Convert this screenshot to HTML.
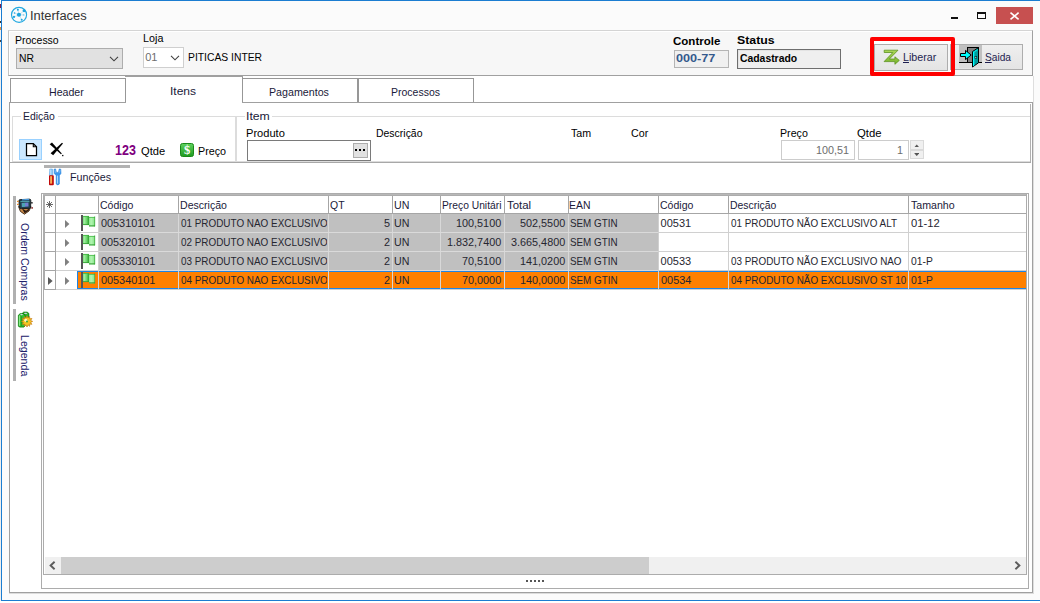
<!DOCTYPE html>
<html lang="pt-BR"><head><meta charset="utf-8"><title>Interfaces</title>
<style>
html,body{margin:0;padding:0;}
body{width:1040px;height:603px;overflow:hidden;background:#fbfbfb;font-family:"Liberation Sans",sans-serif;font-size:11px;}
#w{position:relative;width:1040px;height:603px;overflow:hidden;background:#fbfbfb;}
#w div,#w span.t,#w svg{position:absolute;box-sizing:border-box;}
#w span.t{white-space:nowrap;transform-origin:0 0;}
u{text-decoration:underline;}
</style></head><body><div id="w">
<div style="left:0px;top:0px;width:1px;height:603px;background:linear-gradient(#fff 0 4px,#7a2050 4px 8px,#cfe6fa 8px 10px,#fff 10px 21px,#333 21px 23px,#fff 23px 27px,#e09040 27px 30px,#f0f0f0 30px 40px,#444 40px 42px,#eee 42px 100%);"></div>
<div style="left:1px;top:0px;width:1039px;height:1px;background:#1b7dd1;"></div>
<div style="left:1px;top:0px;width:1px;height:601px;background:#1b7dd1;"></div>
<div style="left:1px;top:600px;width:1039px;height:1px;background:#1b7dd1;"></div>
<div style="left:0px;top:601px;width:1040px;height:2px;background:#fff;"></div>
<svg style="left:10px;top:6px" width="18" height="18" viewBox="0 0 18 18"><g fill="none" stroke="#22a8e0"><circle cx="9.05" cy="8.85" r="7.55" stroke-width="1.15"/><path d="M8.95 8.8 L14.06 4.75 M8.95 8.8 L7.85 3.84 M8.95 8.8 L4.5 7.05 M8.95 8.8 L4 10.96 M8.95 8.8 L11.7 13.77 M8.95 8.8 L13.7 8.95" stroke-width=".55" opacity=".5"/></g><g fill="#1ba4de"><circle cx="8.95" cy="8.77" r="2.05"/><circle cx="14.06" cy="4.75" r="1.45"/><circle cx="7.85" cy="3.84" r="1"/><circle cx="4.5" cy="7.05" r=".8"/><circle cx="4" cy="10.96" r="1.1"/><circle cx="11.7" cy="13.77" r="1"/><circle cx="13.7" cy="8.95" r=".9" opacity=".4"/></g></svg>
<span class="t" style="left:30.31px;top:9.22px;font-size:12.5px;line-height:14.5px;color:#333;transform:scaleX(1.0320);">Interfaces</span>
<div style="left:951px;top:17px;width:7px;height:2px;background:#111;"></div>
<div style="left:977px;top:12px;width:9px;height:7px;border:1px solid #111;border-top-width:2px;"></div>
<div style="left:996px;top:7px;width:37px;height:17px;background:#c75050;"></div>
<svg style="left:1009px;top:10.5px" width="11" height="10" viewBox="0 0 11 10"><path d="M1.5 1.7 L9.6 8.4 M9.6 1.7 L1.5 8.4" stroke="#fff" stroke-width="1.6" fill="none"/></svg>
<div style="left:8px;top:30px;width:1025px;height:46px;background:#f7f7f7;border-top:1px solid #d4d4d4;border-left:1px solid #c4c4c4;border-right:1px solid #a0a0a0;border-bottom:1px solid #a0a0a0;box-shadow:inset 1px 1px 0 #fff;"></div>
<span class="t" style="left:14.74px;top:33.69px;font-size:11px;line-height:13px;color:#000;transform:scaleX(0.9528);">Processo</span>
<div style="left:16px;top:48px;width:107px;height:21px;background:#e1e1e1;border:1px solid #adadad;"></div>
<span class="t" style="left:18.56px;top:51.69px;font-size:11px;line-height:13px;color:#000;transform:scaleX(0.9387);">NR</span>
<svg style="left:108.5px;top:56px" width="10" height="6" viewBox="0 0 10 6"><path d="M1 .8 L5 4.8 L9 .8" stroke="#404040" stroke-width="1.1" fill="none"/></svg>
<span class="t" style="left:142.62px;top:31.69px;font-size:11px;line-height:13px;color:#000;transform:scaleX(0.9799);">Loja</span>
<div style="left:143px;top:47px;width:41px;height:21px;background:#fff;border:1px solid #cfcfcf;"></div>
<span class="t" style="left:145.17px;top:50.69px;font-size:11px;line-height:13px;color:#6d6d6d;">01</span>
<svg style="left:170px;top:55px" width="10" height="6" viewBox="0 0 10 6"><path d="M1 .8 L5 4.8 L9 .8" stroke="#404040" stroke-width="1.1" fill="none"/></svg>
<span class="t" style="left:187.65px;top:50.69px;font-size:11px;line-height:13px;color:#000;transform:scaleX(0.9395);">PITICAS INTER</span>
<span class="t" style="left:673.28px;top:34.69px;font-size:11px;line-height:13px;color:#000;font-weight:bold;transform:scaleX(1.0473);">Controle</span>
<span class="t" style="left:736.90px;top:33.69px;font-size:11px;line-height:13px;color:#000;font-weight:bold;transform:scaleX(1.1183);">Status</span>
<div style="left:674px;top:50px;width:55px;height:18px;background:#f0f0f0;border:1px solid #b4b4b4;"></div>
<span class="t" style="left:675.76px;top:53.44px;font-size:10px;line-height:12px;color:#33588c;font-weight:bold;transform:scaleX(1.2649);">000-77</span>
<div style="left:737px;top:49px;width:104px;height:20px;background:#efefef;border:1px solid #6e6e6e;box-shadow:inset 1px 1px 0 #e3e3e3;"></div>
<span class="t" style="left:740.18px;top:51.69px;font-size:11px;line-height:13px;color:#000;font-weight:bold;transform:scaleX(0.9438);">Cadastrado</span>
<div style="left:874px;top:44px;width:74px;height:27px;background:linear-gradient(#efefef,#e4e4e4);border:1px solid #adadad;"></div>
<div style="left:950px;top:44px;width:73px;height:26px;background:linear-gradient(#efefef,#e4e4e4);border:1px solid #adadad;"></div>
<svg style="left:883px;top:49px" width="18" height="17" viewBox="0 0 18 17"><defs><linearGradient id="gz" x1="0" y1="0" x2="0" y2="1"><stop offset="0" stop-color="#acd858"/><stop offset="1" stop-color="#78b42c"/></linearGradient></defs><path d="M1.2 1.2 H15 L6.4 10 H11.9 V7.8 L16.3 11.4 L11.9 15.3 V12.6 H1.1 L9.8 3.5 H1.2 Z" fill="url(#gz)" stroke="#5c9220" stroke-width=".8" stroke-linejoin="round"/></svg>
<span class="t" style="left:902.87px;top:50.69px;font-size:11px;line-height:13px;color:#1e1e50;transform:scaleX(0.9725);"><u>L</u>iberar</span>
<svg style="left:959px;top:45px" width="23" height="23" viewBox="0 0 23 23">
<rect x="0" y="0" width="23" height="17" fill="#c0c0c0"/>
<rect x="0" y="18" width="23" height="5" fill="#dedede"/>
<rect x="0" y="17" width="23" height="1" fill="#000"/>
<rect x="8.5" y="2.5" width="11" height="15" fill="#808080" stroke="#000" stroke-width="1"/>
<path d="M13.5 6.6 L19.5 2.6 V17.8 L13.5 22 Z" fill="#009c9c" stroke="#000" stroke-width="1" stroke-linejoin="miter"/>
<path d="M14 7 L15.3 6.1 V20.4 L14 21.3 Z" fill="#00ffff"/>
<path d="M15.3 6.1 L18.6 3.9 V5.2 L15.3 7.4 Z" fill="#00e6e6"/>
<rect x="15.9" y="11.6" width="1.8" height="1.8" fill="#a8dcdc" stroke="#002828" stroke-width=".6"/>
<path d="M1.5 8.5 H6.5 V5.4 L12.2 10 L6.5 14.6 V11.5 H1.5 Z" fill="#00ffff" stroke="#000" stroke-width="1" stroke-linejoin="miter"/>
</svg>
<span class="t" style="left:985.24px;top:50.69px;font-size:11px;line-height:13px;color:#1e1e50;transform:scaleX(0.9227);"><u>S</u>aida</span>
<div style="left:874px;top:41px;width:77px;height:3px;background:#fff;"></div>
<div style="left:874px;top:71px;width:77px;height:1px;background:#fff;"></div>
<div style="left:870px;top:37px;width:85px;height:39px;border:4px solid #ff0000;border-radius:2px;"></div>
<div style="left:9px;top:76px;width:1024px;height:26px;background:#fff;"></div>
<div style="left:1033px;top:76px;width:1px;height:518px;background:#dedede;"></div>
<div style="left:9px;top:102px;width:1024px;height:491px;background:#fff;border:1px solid #a0a0a0;"></div>
<div style="left:9px;top:593px;width:1025px;height:1px;background:#dcdcdc;"></div>
<div style="left:10px;top:78px;width:116px;height:24px;background:#fff;border:1px solid #979797;border-bottom:none;"></div>
<div style="left:242px;top:78px;width:116px;height:24px;background:#fff;border:1px solid #979797;border-bottom:none;"></div>
<div style="left:358px;top:78px;width:116px;height:24px;background:#fff;border:1px solid #979797;border-bottom:none;"></div>
<div style="left:242px;top:76px;width:1px;height:2px;background:#979797;"></div>
<div style="left:126px;top:77px;width:116px;height:26px;background:#fff;"></div>
<div style="left:125px;top:76px;width:118px;height:1px;background:#a0a0a0;"></div>
<span class="t" style="left:48.88px;top:85.69px;font-size:11px;line-height:13px;color:#1a1a3a;transform:scaleX(0.9643);">Header</span>
<span class="t" style="left:169.80px;top:84.69px;font-size:11px;line-height:13px;color:#1a1a3a;transform:scaleX(1.0913);">Itens</span>
<span class="t" style="left:268.88px;top:85.69px;font-size:11px;line-height:13px;color:#1a1a3a;transform:scaleX(0.9698);">Pagamentos</span>
<span class="t" style="left:390.74px;top:85.69px;font-size:11px;line-height:13px;color:#1a1a3a;transform:scaleX(0.9548);">Processos</span>
<div style="left:1030px;top:104px;width:1px;height:59px;background:#b0b0b0;"></div>
<div style="left:10px;top:162px;width:1021px;height:1px;background:#a8a8a8;"></div>
<div style="left:12px;top:116px;width:224px;height:46px;border:1px solid #dcdcdc;"></div>
<div style="left:236px;top:116px;width:794px;height:46px;border-left:1px solid #dcdcdc;border-top:1px solid #dcdcdc;border-bottom:1px solid #dcdcdc;"></div>
<div style="left:21px;top:110px;width:37px;height:13px;background:#fff;"></div>
<div style="left:245px;top:110px;width:27px;height:13px;background:#fff;"></div>
<span class="t" style="left:23.05px;top:109.69px;font-size:11px;line-height:13px;color:#1a1a3a;transform:scaleX(0.9450);">Edição</span>
<span class="t" style="left:246.17px;top:109.69px;font-size:11px;line-height:13px;color:#1a1a3a;transform:scaleX(1.1138);">Item</span>
<div style="left:19px;top:139px;width:23px;height:21px;background:#cce8ff;border:1px solid #99d1ff;"></div>
<svg style="left:25px;top:142px" width="13" height="15" viewBox="0 0 13 15"><path d="M1.5 1.5 H8.3 L11.5 4.7 V13.5 H1.5 Z" fill="#fff" stroke="#000" stroke-width="1.25" stroke-linejoin="miter"/><path d="M8.3 1.5 V4.7 H11.5" fill="none" stroke="#000" stroke-width="1.1"/></svg>
<svg style="left:49px;top:142px" width="16" height="16" viewBox="0 0 16 16"><path d="M0.7 2.3 L3.0 0.6 L12.8 11.6 L12.0 12.3 Z" fill="#000"/><path d="M13.0 0.8 L14.0 1.6 L4.2 13.2 L1.6 11.2 Z" fill="#000"/><rect x="13.1" y="12.9" width="1.3" height="1.3" fill="#000"/></svg>
<span class="t" style="left:114.82px;top:142.15px;font-size:14px;line-height:16px;color:#800080;font-weight:bold;transform:scaleX(0.8937);">123</span>
<span class="t" style="left:141.38px;top:144.69px;font-size:11px;line-height:13px;color:#000;transform:scaleX(1.0109);">Qtde</span>
<svg style="left:180px;top:143px" width="14" height="14" viewBox="0 0 14 14"><defs><linearGradient id="gd" x1="0" y1="0" x2="0" y2="1"><stop offset="0" stop-color="#5fd35f"/><stop offset="1" stop-color="#1f9a1f"/></linearGradient></defs><rect x=".5" y=".5" width="13" height="13" rx="2" fill="url(#gd)" stroke="#1a8a1a"/><text x="7" y="11.4" font-family="Liberation Serif,serif" font-weight="bold" font-size="12.5" fill="#fff" text-anchor="middle">$</text></svg>
<span class="t" style="left:197.62px;top:144.69px;font-size:11px;line-height:13px;color:#000;transform:scaleX(0.9772);">Preço</span>
<span class="t" style="left:245.79px;top:126.69px;font-size:11px;line-height:13px;color:#000;transform:scaleX(1.0087);">Produto</span>
<span class="t" style="left:375.64px;top:126.69px;font-size:11px;line-height:13px;color:#000;transform:scaleX(0.9506);">Descrição</span>
<span class="t" style="left:570.97px;top:126.69px;font-size:11px;line-height:13px;color:#000;transform:scaleX(0.9685);">Tam</span>
<span class="t" style="left:630.97px;top:126.69px;font-size:11px;line-height:13px;color:#000;transform:scaleX(0.9706);">Cor</span>
<span class="t" style="left:779.73px;top:126.69px;font-size:11px;line-height:13px;color:#000;transform:scaleX(0.9680);">Preço</span>
<span class="t" style="left:857.17px;top:126.69px;font-size:11px;line-height:13px;color:#000;transform:scaleX(1.0284);">Qtde</span>
<div style="left:247px;top:140px;width:124px;height:21px;background:#fff;border:1px solid #7a7a7a;"></div>
<div style="left:353px;top:143px;width:15px;height:15px;background:#e1e1e1;border:1px solid #adadad;"></div>
<div style="left:355px;top:149px;width:2px;height:2px;background:#000;"></div>
<div style="left:359px;top:149px;width:2px;height:2px;background:#000;"></div>
<div style="left:363px;top:149px;width:2px;height:2px;background:#000;"></div>
<div style="left:781px;top:140px;width:74px;height:20px;background:#fff;border:1px solid #cccccc;"></div>
<span class="t" style="left:816.35px;top:143.69px;font-size:11px;line-height:13px;color:#6d6d6d;transform:scaleX(0.9800);">100,51</span>
<div style="left:858px;top:140px;width:51px;height:20px;background:#fff;border:1px solid #cccccc;"></div>
<span class="t" style="left:897.22px;top:143.69px;font-size:11px;line-height:13px;color:#6d6d6d;transform:scaleX(0.9800);">1</span>
<div style="left:910px;top:140px;width:14px;height:10px;background:#f0f0f0;border:1px solid #dadada;"></div>
<div style="left:910px;top:150px;width:14px;height:9px;background:#f0f0f0;border:1px solid #dadada;"></div>
<svg style="left:913.7px;top:143.6px" width="5.5" height="3.5" viewBox="0 0 6 4"><path d="M0 4 L3 0.5 L6 4 Z" fill="#555"/></svg>
<svg style="left:913.7px;top:152.8px" width="5.5" height="3.5" viewBox="0 0 6 4"><path d="M0 0 L3 3.5 L6 0 Z" fill="#555"/></svg>
<div style="left:44px;top:165px;width:86px;height:3px;background:#b2b2b2;"></div>
<svg style="left:48px;top:168px" width="14" height="18" viewBox="0 0 14 18">
<path d="M1.8 1 H4.4 L4.8 7.4 H1.4 Z" fill="#7cc0f2" stroke="#4a9be0" stroke-width=".5"/><path d="M2.8 1.4 V7" stroke="#e6f4ff" stroke-width=".8"/>
<rect x="1" y="7.2" width="4.8" height="10" rx=".9" fill="#c00808"/><rect x="2.5" y="8.2" width="1.6" height="7.4" fill="#f5a83c"/><rect x="2.5" y="8.2" width=".7" height="7.4" fill="#ffd890"/>
<path d="M6 1.2 L7.6 .9 L8.4 4.4 L10.4 4.4 L11.2 .9 L12.8 1.2 L13 5.4 L11.4 7.6 L11.4 16 Q9.8 17.8 8.2 16 L8.2 7.6 L6.2 5.4 Z" fill="#3b98ec" stroke="#1f7ad6" stroke-width=".5"/><path d="M9.6 7.6 V15.6" stroke="#b8defc" stroke-width="1"/><path d="M7 2 L7.4 4.8 M12 2 L11.6 4.8" stroke="#a8d4fa" stroke-width=".6"/></svg>
<span class="t" style="left:69.72px;top:170.69px;font-size:11px;line-height:13px;color:#1a1a3a;transform:scaleX(0.9731);">Funções</span>
<div style="left:13px;top:196px;width:3px;height:108px;background:#b0b0b0;"></div>
<div style="left:13px;top:309px;width:3px;height:72px;background:#b0b0b0;"></div>
<svg style="left:17px;top:198px" width="16" height="17" viewBox="0 0 16 17">
<path d="M1.6 8.6 L14 8.6 L12 13 L7.4 16.2 L3.4 13.4 Z" fill="#c98a4a" stroke="#3a2410" stroke-width=".9"/>
<path d="M5 10.5 L9 12.8 L12.4 10.2 L11.6 12.8 L7.6 15.2 Z" fill="#2a1a10"/>
<path d="M2 2.6 Q2 1.6 3.2 1.6 L12.6 1.2 Q13.8 1.2 13.8 2.4 L13.6 9.4 Q13.4 10.6 12 10.4 L4.4 10.6 Q2.4 10.6 2.2 9 Z" fill="#1f3f48" stroke="#15181c" stroke-width=".9"/>
<path d="M5 1.2 L12 .8 L12.2 2.2 L4.8 2.6 Z" fill="#4a9adc"/>
<path d="M4.6 5 L11.4 4.6 L11.6 8.6 L4.8 9 Z" fill="#6f7fd0"/><path d="M5 5.3 L8 5.1 L8 8.6 L5 8.8 Z" fill="#4aa7b0"/>
<path d="M3.4 3.6 H12.4" stroke="#5ec0c8" stroke-width=".8"/>
<rect x="0" y="2.8" width="1.8" height="1.2" fill="#e0862a"/><rect x="0" y="5.8" width="1.8" height="1.2" fill="#e0862a"/>
<rect x="14.2" y="4" width="1.4" height="1.6" fill="#1a1a1a"/><rect x="14.4" y="9" width="1.4" height="1.8" fill="#8a2a2a"/></svg>
<svg style="left:17px;top:311px" width="17" height="17" viewBox="0 0 17 17">
<path d="M5.4 2.2 L6.6 1.2 H10.2 L11.8 2.4 V12 H5.4 Z" fill="#2fb82f" stroke="#0c7a0c" stroke-width=".9"/>
<path d="M1.4 4.2 L3 2.8 H7 L8 4 V15 L7 16 H2.4 L1.4 15 Z" fill="#35c235" stroke="#0c7a0c" stroke-width=".9"/>
<path d="M2.4 4.6 V14.8" stroke="#8eea8e" stroke-width="1.1"/><path d="M4.6 5.2 V15" stroke="#1f9a1f" stroke-width=".9"/>
<ellipse cx="4.6" cy="3.6" rx="1.5" ry=".6" fill="#d8dce8"/><ellipse cx="8.6" cy="2.4" rx="1.5" ry=".6" fill="#c8cce0"/>
<g transform="translate(10,10.4)"><path d="M0 -5.6 L1 -3.4 L2.6 -4.9 L2.7 -2.6 L4.9 -2.9 L3.6 -1 L5.6 0 L3.6 1 L4.9 2.9 L2.7 2.6 L2.6 4.9 L1 3.4 L0 5.6 L-1 3.4 L-2.6 4.9 L-2.7 2.6 L-4.9 2.9 L-3.6 1 L-5.6 0 L-3.6 -1 L-4.9 -2.9 L-2.7 -2.6 L-2.6 -4.9 L-1 -3.4 Z" fill="#f6c524" stroke="#c4780e" stroke-width=".7"/><circle cx="-1.2" cy="-1.2" r="1.5" fill="#fff6d0"/><circle r="1" fill="#3aa83a"/></g></svg>
<span class="t" style="left:31.3px;top:222.6px;font-size:11px;line-height:13px;color:#20206a;transform-origin:0 0;transform:rotate(90deg) scaleX(0.955);">Ordem Compras</span>
<span class="t" style="left:31.3px;top:335.4px;font-size:11px;line-height:13px;color:#20206a;transform-origin:0 0;transform:rotate(90deg) scaleX(0.964);">Legenda</span>
<svg style="left:0;top:0" width="0" height="0"><defs><linearGradient id="fa" x1="0" y1="0" x2="1" y2="0"><stop offset="0" stop-color="#86e686"/><stop offset=".6" stop-color="#6fd86f"/><stop offset="1" stop-color="#2f9e2f"/></linearGradient><linearGradient id="fb" x1="0" y1="0" x2="1" y2="0"><stop offset="0" stop-color="#8ee88e"/><stop offset=".35" stop-color="#b2f6b2"/><stop offset="1" stop-color="#84e284"/></linearGradient></defs></svg>
<div style="left:41px;top:193px;width:988px;height:396px;border:1px solid #acacac;"></div>
<div style="left:43px;top:193px;width:984px;height:382px;border:1px solid #acacac;border-top-width:3px;"></div>
<div style="left:44px;top:196px;width:1px;height:94px;background:#acacac;"></div>
<div style="left:43px;top:194px;width:983px;height:1px;background:#b8b8b8;"></div>
<div style="left:45px;top:213px;width:981px;height:1px;background:#a6a6a6;"></div>
<div style="left:55px;top:196px;width:1px;height:17px;background:#a6a6a6;"></div>
<div style="left:98px;top:196px;width:1px;height:17px;background:#a6a6a6;"></div>
<div style="left:178px;top:196px;width:1px;height:17px;background:#a6a6a6;"></div>
<div style="left:328px;top:196px;width:1px;height:17px;background:#a6a6a6;"></div>
<div style="left:392px;top:196px;width:1px;height:17px;background:#a6a6a6;"></div>
<div style="left:440px;top:196px;width:1px;height:17px;background:#a6a6a6;"></div>
<div style="left:504px;top:196px;width:1px;height:17px;background:#a6a6a6;"></div>
<div style="left:568px;top:196px;width:1px;height:17px;background:#a6a6a6;"></div>
<div style="left:658px;top:196px;width:1px;height:17px;background:#a6a6a6;"></div>
<div style="left:728px;top:196px;width:1px;height:17px;background:#a6a6a6;"></div>
<div style="left:908px;top:196px;width:1px;height:17px;background:#a6a6a6;"></div>
<div style="left:99px;top:196px;width:78px;height:17px;overflow:hidden;"><span class="t" style="left:1.07px;top:2.69px;font-size:11px;line-height:13px;color:#1a1a3a;transform:scaleX(0.9572);">Código</span></div>
<div style="left:179px;top:196px;width:148px;height:17px;overflow:hidden;"><span class="t" style="left:0.74px;top:2.69px;font-size:11px;line-height:13px;color:#1a1a3a;transform:scaleX(0.9600);">Descrição</span></div>
<div style="left:329px;top:196px;width:62px;height:17px;overflow:hidden;"><span class="t" style="left:1.11px;top:2.69px;font-size:11px;line-height:13px;color:#1a1a3a;transform:scaleX(0.9501);">QT</span></div>
<div style="left:393px;top:196px;width:46px;height:17px;overflow:hidden;"><span class="t" style="left:0.59px;top:2.69px;font-size:11px;line-height:13px;color:#1a1a3a;transform:scaleX(0.9673);">UN</span></div>
<div style="left:441px;top:196px;width:62px;height:17px;overflow:hidden;"><span class="t" style="left:0.91px;top:2.69px;font-size:11px;line-height:13px;color:#1a1a3a;transform:scaleX(0.9350);">Preço Unitári</span></div>
<div style="left:505px;top:196px;width:62px;height:17px;overflow:hidden;"><span class="t" style="left:1.65px;top:2.69px;font-size:11px;line-height:13px;color:#1a1a3a;transform:scaleX(1.0376);">Total</span></div>
<div style="left:569px;top:196px;width:88px;height:17px;overflow:hidden;"><span class="t" style="left:0.40px;top:2.69px;font-size:11px;line-height:13px;color:#1a1a3a;transform:scaleX(0.9484);">EAN</span></div>
<div style="left:659px;top:196px;width:68px;height:17px;overflow:hidden;"><span class="t" style="left:1.07px;top:2.69px;font-size:11px;line-height:13px;color:#1a1a3a;transform:scaleX(0.9572);">Código</span></div>
<div style="left:729px;top:196px;width:178px;height:17px;overflow:hidden;"><span class="t" style="left:0.75px;top:2.69px;font-size:11px;line-height:13px;color:#1a1a3a;transform:scaleX(0.9464);">Descrição</span></div>
<div style="left:909px;top:196px;width:116px;height:17px;overflow:hidden;"><span class="t" style="left:1.77px;top:2.69px;font-size:11px;line-height:13px;color:#1a1a3a;transform:scaleX(0.9649);">Tamanho</span></div>
<svg style="left:46px;top:201px" width="7" height="7" viewBox="0 0 7 7"><path d="M3.5 0 V7 M0 3.5 H7 M1 1 L6 6 M6 1 L1 6" stroke="#3c3c3c" stroke-width=".75" fill="none"/></svg>
<div style="left:45px;top:232px;width:10px;height:1px;background:#a6a6a6;"></div>
<div style="left:55px;top:214px;width:1px;height:19px;background:#a6a6a6;"></div>
<div style="left:99px;top:214px;width:559px;height:18px;background:#c0c0c0;"></div>
<div style="left:56px;top:232px;width:43px;height:1px;background:#d0d0d0;"></div>
<div style="left:99px;top:232px;width:559px;height:1px;background:#dadada;"></div>
<div style="left:658px;top:232px;width:368px;height:1px;background:#d0d0d0;"></div>
<div style="left:98px;top:214px;width:1px;height:18px;background:#d0d0d0;"></div>
<div style="left:178px;top:214px;width:1px;height:18px;background:#d8d8d8;"></div>
<div style="left:328px;top:214px;width:1px;height:18px;background:#d8d8d8;"></div>
<div style="left:392px;top:214px;width:1px;height:18px;background:#d8d8d8;"></div>
<div style="left:440px;top:214px;width:1px;height:18px;background:#d8d8d8;"></div>
<div style="left:504px;top:214px;width:1px;height:18px;background:#d8d8d8;"></div>
<div style="left:568px;top:214px;width:1px;height:18px;background:#d8d8d8;"></div>
<div style="left:658px;top:214px;width:1px;height:18px;background:#d0d0d0;"></div>
<div style="left:728px;top:214px;width:1px;height:18px;background:#d0d0d0;"></div>
<div style="left:908px;top:214px;width:1px;height:18px;background:#d0d0d0;"></div>
<svg style="left:65px;top:220px" width="5" height="8" viewBox="0 0 5 8"><path d="M0 0 L4.4 4 L0 8 Z" fill="#808080"/></svg>
<svg style="left:80px;top:214px" width="16" height="18" viewBox="0 0 16 18"><rect x="1" y="1" width="2" height="16" fill="#555"/><rect x="3" y="2" width="6" height="9" fill="url(#fa)"/><path d="M3 2.4 H9" stroke="#3fb43f" stroke-width=".8"/><path d="M3 10.6 H9" stroke="#2f9c2f" stroke-width=".8"/><rect x="9" y="3" width="6" height="9.4" fill="url(#fb)"/><path d="M9 3.4 H15" stroke="#44b844" stroke-width=".8"/><rect x="9" y="11.4" width="6" height="1" fill="#2f9a2f"/><path d="M14.7 2.4 V12.3" stroke="#35a035" stroke-width=".7"/><path d="M4.6 3.2 V9.8" stroke="#a8f0a8" stroke-width="1.6" opacity=".8"/></svg>
<div style="left:99px;top:214px;width:78px;height:18px;overflow:hidden;"><span class="t" style="left:1.58px;top:2.69px;font-size:11px;line-height:13px;color:#262630;transform:scaleX(0.9871);">005310101</span></div>
<div style="left:179px;top:214px;width:148px;height:18px;overflow:hidden;"><span class="t" style="left:1.62px;top:2.69px;font-size:11px;line-height:13px;color:#262630;transform:scaleX(0.9001);">01 PRODUTO NAO EXCLUSIVO</span></div>
<div style="left:329px;top:214px;width:62px;height:18px;overflow:hidden;"><span class="t" style="left:55.17px;top:2.69px;font-size:11px;line-height:13px;color:#262630;transform:scaleX(0.9850);">5</span></div>
<div style="left:393px;top:214px;width:46px;height:18px;overflow:hidden;"><span class="t" style="left:0.59px;top:2.69px;font-size:11px;line-height:13px;color:#262630;transform:scaleX(0.9673);">UN</span></div>
<div style="left:441px;top:214px;width:62px;height:18px;overflow:hidden;"><span class="t" style="left:15.22px;top:2.69px;font-size:11px;line-height:13px;color:#262630;transform:scaleX(0.9850);">100,5100</span></div>
<div style="left:505px;top:214px;width:62px;height:18px;overflow:hidden;"><span class="t" style="left:15.22px;top:2.69px;font-size:11px;line-height:13px;color:#262630;transform:scaleX(0.9850);">502,5500</span></div>
<div style="left:569px;top:214px;width:88px;height:18px;overflow:hidden;"><span class="t" style="left:1.15px;top:2.69px;font-size:11px;line-height:13px;color:#262630;transform:scaleX(0.8943);">SEM GTIN</span></div>
<div style="left:659px;top:214px;width:68px;height:18px;overflow:hidden;"><span class="t" style="left:1.58px;top:2.69px;font-size:11px;line-height:13px;color:#262630;">00531</span></div>
<div style="left:729px;top:214px;width:178px;height:18px;overflow:hidden;"><span class="t" style="left:1.62px;top:2.69px;font-size:11px;line-height:13px;color:#262630;transform:scaleX(0.8980);">01 PRODUTO NÃO EXCLUSIVO ALT</span></div>
<div style="left:909px;top:214px;width:116px;height:18px;overflow:hidden;"><span class="t" style="left:1.57px;top:2.69px;font-size:11px;line-height:13px;color:#262630;transform:scaleX(1.0216);">01-12</span></div>
<div style="left:45px;top:251px;width:10px;height:1px;background:#a6a6a6;"></div>
<div style="left:55px;top:233px;width:1px;height:19px;background:#a6a6a6;"></div>
<div style="left:99px;top:233px;width:559px;height:18px;background:#c0c0c0;"></div>
<div style="left:56px;top:251px;width:43px;height:1px;background:#d0d0d0;"></div>
<div style="left:99px;top:251px;width:559px;height:1px;background:#dadada;"></div>
<div style="left:658px;top:251px;width:368px;height:1px;background:#d0d0d0;"></div>
<div style="left:98px;top:233px;width:1px;height:18px;background:#d0d0d0;"></div>
<div style="left:178px;top:233px;width:1px;height:18px;background:#d8d8d8;"></div>
<div style="left:328px;top:233px;width:1px;height:18px;background:#d8d8d8;"></div>
<div style="left:392px;top:233px;width:1px;height:18px;background:#d8d8d8;"></div>
<div style="left:440px;top:233px;width:1px;height:18px;background:#d8d8d8;"></div>
<div style="left:504px;top:233px;width:1px;height:18px;background:#d8d8d8;"></div>
<div style="left:568px;top:233px;width:1px;height:18px;background:#d8d8d8;"></div>
<div style="left:658px;top:233px;width:1px;height:18px;background:#d0d0d0;"></div>
<div style="left:728px;top:233px;width:1px;height:18px;background:#d0d0d0;"></div>
<div style="left:908px;top:233px;width:1px;height:18px;background:#d0d0d0;"></div>
<svg style="left:65px;top:239px" width="5" height="8" viewBox="0 0 5 8"><path d="M0 0 L4.4 4 L0 8 Z" fill="#808080"/></svg>
<svg style="left:80px;top:233px" width="16" height="18" viewBox="0 0 16 18"><rect x="1" y="1" width="2" height="16" fill="#555"/><rect x="3" y="2" width="6" height="9" fill="url(#fa)"/><path d="M3 2.4 H9" stroke="#3fb43f" stroke-width=".8"/><path d="M3 10.6 H9" stroke="#2f9c2f" stroke-width=".8"/><rect x="9" y="3" width="6" height="9.4" fill="url(#fb)"/><path d="M9 3.4 H15" stroke="#44b844" stroke-width=".8"/><rect x="9" y="11.4" width="6" height="1" fill="#2f9a2f"/><path d="M14.7 2.4 V12.3" stroke="#35a035" stroke-width=".7"/><path d="M4.6 3.2 V9.8" stroke="#a8f0a8" stroke-width="1.6" opacity=".8"/></svg>
<div style="left:99px;top:233px;width:78px;height:18px;overflow:hidden;"><span class="t" style="left:1.58px;top:2.69px;font-size:11px;line-height:13px;color:#262630;transform:scaleX(0.9871);">005320101</span></div>
<div style="left:179px;top:233px;width:148px;height:18px;overflow:hidden;"><span class="t" style="left:1.62px;top:2.69px;font-size:11px;line-height:13px;color:#262630;transform:scaleX(0.9001);">02 PRODUTO NAO EXCLUSIVO</span></div>
<div style="left:329px;top:233px;width:62px;height:18px;overflow:hidden;"><span class="t" style="left:55.26px;top:2.69px;font-size:11px;line-height:13px;color:#262630;transform:scaleX(0.9850);">2</span></div>
<div style="left:393px;top:233px;width:46px;height:18px;overflow:hidden;"><span class="t" style="left:0.59px;top:2.69px;font-size:11px;line-height:13px;color:#262630;transform:scaleX(0.9673);">UN</span></div>
<div style="left:441px;top:233px;width:62px;height:18px;overflow:hidden;"><span class="t" style="left:6.18px;top:2.69px;font-size:11px;line-height:13px;color:#262630;transform:scaleX(0.9850);">1.832,7400</span></div>
<div style="left:505px;top:233px;width:62px;height:18px;overflow:hidden;"><span class="t" style="left:6.18px;top:2.69px;font-size:11px;line-height:13px;color:#262630;transform:scaleX(0.9850);">3.665,4800</span></div>
<div style="left:569px;top:233px;width:88px;height:18px;overflow:hidden;"><span class="t" style="left:1.15px;top:2.69px;font-size:11px;line-height:13px;color:#262630;transform:scaleX(0.8943);">SEM GTIN</span></div>
<div style="left:45px;top:270px;width:10px;height:1px;background:#a6a6a6;"></div>
<div style="left:55px;top:252px;width:1px;height:19px;background:#a6a6a6;"></div>
<div style="left:99px;top:252px;width:559px;height:18px;background:#c0c0c0;"></div>
<div style="left:56px;top:270px;width:43px;height:1px;background:#d0d0d0;"></div>
<div style="left:99px;top:270px;width:559px;height:1px;background:#dadada;"></div>
<div style="left:658px;top:270px;width:368px;height:1px;background:#d0d0d0;"></div>
<div style="left:98px;top:252px;width:1px;height:18px;background:#d0d0d0;"></div>
<div style="left:178px;top:252px;width:1px;height:18px;background:#d8d8d8;"></div>
<div style="left:328px;top:252px;width:1px;height:18px;background:#d8d8d8;"></div>
<div style="left:392px;top:252px;width:1px;height:18px;background:#d8d8d8;"></div>
<div style="left:440px;top:252px;width:1px;height:18px;background:#d8d8d8;"></div>
<div style="left:504px;top:252px;width:1px;height:18px;background:#d8d8d8;"></div>
<div style="left:568px;top:252px;width:1px;height:18px;background:#d8d8d8;"></div>
<div style="left:658px;top:252px;width:1px;height:18px;background:#d0d0d0;"></div>
<div style="left:728px;top:252px;width:1px;height:18px;background:#d0d0d0;"></div>
<div style="left:908px;top:252px;width:1px;height:18px;background:#d0d0d0;"></div>
<svg style="left:65px;top:258px" width="5" height="8" viewBox="0 0 5 8"><path d="M0 0 L4.4 4 L0 8 Z" fill="#808080"/></svg>
<svg style="left:80px;top:252px" width="16" height="18" viewBox="0 0 16 18"><rect x="1" y="1" width="2" height="16" fill="#555"/><rect x="3" y="2" width="6" height="9" fill="url(#fa)"/><path d="M3 2.4 H9" stroke="#3fb43f" stroke-width=".8"/><path d="M3 10.6 H9" stroke="#2f9c2f" stroke-width=".8"/><rect x="9" y="3" width="6" height="9.4" fill="url(#fb)"/><path d="M9 3.4 H15" stroke="#44b844" stroke-width=".8"/><rect x="9" y="11.4" width="6" height="1" fill="#2f9a2f"/><path d="M14.7 2.4 V12.3" stroke="#35a035" stroke-width=".7"/><path d="M4.6 3.2 V9.8" stroke="#a8f0a8" stroke-width="1.6" opacity=".8"/></svg>
<div style="left:99px;top:252px;width:78px;height:18px;overflow:hidden;"><span class="t" style="left:1.58px;top:2.69px;font-size:11px;line-height:13px;color:#262630;transform:scaleX(0.9871);">005330101</span></div>
<div style="left:179px;top:252px;width:148px;height:18px;overflow:hidden;"><span class="t" style="left:1.62px;top:2.69px;font-size:11px;line-height:13px;color:#262630;transform:scaleX(0.9001);">03 PRODUTO NAO EXCLUSIVO</span></div>
<div style="left:329px;top:252px;width:62px;height:18px;overflow:hidden;"><span class="t" style="left:55.26px;top:2.69px;font-size:11px;line-height:13px;color:#262630;transform:scaleX(0.9850);">2</span></div>
<div style="left:393px;top:252px;width:46px;height:18px;overflow:hidden;"><span class="t" style="left:0.59px;top:2.69px;font-size:11px;line-height:13px;color:#262630;transform:scaleX(0.9673);">UN</span></div>
<div style="left:441px;top:252px;width:62px;height:18px;overflow:hidden;"><span class="t" style="left:21.24px;top:2.69px;font-size:11px;line-height:13px;color:#262630;transform:scaleX(0.9850);">70,5100</span></div>
<div style="left:505px;top:252px;width:62px;height:18px;overflow:hidden;"><span class="t" style="left:15.22px;top:2.69px;font-size:11px;line-height:13px;color:#262630;transform:scaleX(0.9850);">141,0200</span></div>
<div style="left:569px;top:252px;width:88px;height:18px;overflow:hidden;"><span class="t" style="left:1.15px;top:2.69px;font-size:11px;line-height:13px;color:#262630;transform:scaleX(0.8943);">SEM GTIN</span></div>
<div style="left:659px;top:252px;width:68px;height:18px;overflow:hidden;"><span class="t" style="left:1.58px;top:2.69px;font-size:11px;line-height:13px;color:#262630;">00533</span></div>
<div style="left:729px;top:252px;width:178px;height:18px;overflow:hidden;"><span class="t" style="left:1.62px;top:2.69px;font-size:11px;line-height:13px;color:#262630;transform:scaleX(0.8980);">03 PRODUTO NÃO EXCLUSIVO NAO</span></div>
<div style="left:909px;top:252px;width:116px;height:18px;overflow:hidden;"><span class="t" style="left:1.60px;top:2.69px;font-size:11px;line-height:13px;color:#262630;transform:scaleX(0.9399);">01-P</span></div>
<div style="left:45px;top:289px;width:10px;height:1px;background:#a6a6a6;"></div>
<div style="left:55px;top:271px;width:1px;height:19px;background:#a6a6a6;"></div>
<div style="left:56px;top:289px;width:970px;height:1px;background:#d0d0d0;"></div>
<div style="left:77px;top:271px;width:949px;height:18px;background:#ff8000;border:1px solid #1e84e6;border-right:none;"></div>
<div style="left:98px;top:271px;width:1px;height:18px;background:#d6d6d6;"></div>
<div style="left:178px;top:271px;width:1px;height:18px;background:#d6d6d6;"></div>
<div style="left:328px;top:271px;width:1px;height:18px;background:#d6d6d6;"></div>
<div style="left:392px;top:271px;width:1px;height:18px;background:#d6d6d6;"></div>
<div style="left:440px;top:271px;width:1px;height:18px;background:#d6d6d6;"></div>
<div style="left:504px;top:271px;width:1px;height:18px;background:#d6d6d6;"></div>
<div style="left:568px;top:271px;width:1px;height:18px;background:#d6d6d6;"></div>
<div style="left:658px;top:271px;width:1px;height:18px;background:#d6d6d6;"></div>
<div style="left:728px;top:271px;width:1px;height:18px;background:#d6d6d6;"></div>
<div style="left:908px;top:271px;width:1px;height:18px;background:#d6d6d6;"></div>
<svg style="left:48px;top:277px" width="5" height="8" viewBox="0 0 5 8"><path d="M0 0 L4.6 4 L0 8 Z" fill="#5a5a5a"/></svg>
<svg style="left:65px;top:277px" width="5" height="8" viewBox="0 0 5 8"><path d="M0 0 L4.4 4 L0 8 Z" fill="#808080"/></svg>
<svg style="left:80px;top:271px" width="16" height="18" viewBox="0 0 16 18"><rect x="1" y="1" width="2" height="16" fill="#555"/><rect x="3" y="2" width="6" height="9" fill="url(#fa)"/><path d="M3 2.4 H9" stroke="#3fb43f" stroke-width=".8"/><path d="M3 10.6 H9" stroke="#2f9c2f" stroke-width=".8"/><rect x="9" y="3" width="6" height="9.4" fill="url(#fb)"/><path d="M9 3.4 H15" stroke="#44b844" stroke-width=".8"/><rect x="9" y="11.4" width="6" height="1" fill="#2f9a2f"/><path d="M14.7 2.4 V12.3" stroke="#35a035" stroke-width=".7"/><path d="M4.6 3.2 V9.8" stroke="#a8f0a8" stroke-width="1.6" opacity=".8"/></svg>
<div style="left:99px;top:271px;width:78px;height:18px;overflow:hidden;"><span class="t" style="left:1.58px;top:2.69px;font-size:11px;line-height:13px;color:#262630;transform:scaleX(0.9871);">005340101</span></div>
<div style="left:179px;top:271px;width:148px;height:18px;overflow:hidden;"><span class="t" style="left:1.62px;top:2.69px;font-size:11px;line-height:13px;color:#262630;transform:scaleX(0.9001);">04 PRODUTO NAO EXCLUSIVO</span></div>
<div style="left:329px;top:271px;width:62px;height:18px;overflow:hidden;"><span class="t" style="left:55.26px;top:2.69px;font-size:11px;line-height:13px;color:#262630;transform:scaleX(0.9850);">2</span></div>
<div style="left:393px;top:271px;width:46px;height:18px;overflow:hidden;"><span class="t" style="left:0.59px;top:2.69px;font-size:11px;line-height:13px;color:#262630;transform:scaleX(0.9673);">UN</span></div>
<div style="left:441px;top:271px;width:62px;height:18px;overflow:hidden;"><span class="t" style="left:21.24px;top:2.69px;font-size:11px;line-height:13px;color:#262630;transform:scaleX(0.9850);">70,0000</span></div>
<div style="left:505px;top:271px;width:62px;height:18px;overflow:hidden;"><span class="t" style="left:15.22px;top:2.69px;font-size:11px;line-height:13px;color:#262630;transform:scaleX(0.9850);">140,0000</span></div>
<div style="left:569px;top:271px;width:88px;height:18px;overflow:hidden;"><span class="t" style="left:1.15px;top:2.69px;font-size:11px;line-height:13px;color:#262630;transform:scaleX(0.8943);">SEM GTIN</span></div>
<div style="left:659px;top:271px;width:68px;height:18px;overflow:hidden;"><span class="t" style="left:1.58px;top:2.69px;font-size:11px;line-height:13px;color:#262630;transform:scaleX(0.9916);">00534</span></div>
<div style="left:729px;top:271px;width:178px;height:18px;overflow:hidden;"><span class="t" style="left:1.62px;top:2.69px;font-size:11px;line-height:13px;color:#262630;transform:scaleX(0.8980);">04 PRODUTO NÃO EXCLUSIVO ST 10</span></div>
<div style="left:909px;top:271px;width:116px;height:18px;overflow:hidden;"><span class="t" style="left:1.60px;top:2.69px;font-size:11px;line-height:13px;color:#262630;transform:scaleX(0.9399);">01-P</span></div>
<div style="left:45px;top:557px;width:981px;height:17px;background:#f0f0f0;"></div>
<div style="left:61px;top:557px;width:588px;height:17px;background:#cdcdcd;"></div>
<svg style="left:49px;top:561px" width="7" height="9" viewBox="0 0 7 9"><path d="M5.6 .8 L1.6 4.5 L5.6 8.2" stroke="#5c5c5c" stroke-width="1.9" fill="none"/></svg>
<svg style="left:1014px;top:561px" width="7" height="9" viewBox="0 0 7 9"><path d="M1.4 .8 L5.4 4.5 L1.4 8.2" stroke="#5c5c5c" stroke-width="1.9" fill="none"/></svg>
<div style="left:526px;top:580px;width:2px;height:2px;background:#555;"></div>
<div style="left:530px;top:580px;width:2px;height:2px;background:#555;"></div>
<div style="left:534px;top:580px;width:2px;height:2px;background:#555;"></div>
<div style="left:538px;top:580px;width:2px;height:2px;background:#555;"></div>
<div style="left:542px;top:580px;width:2px;height:2px;background:#555;"></div>
</div></body></html>
